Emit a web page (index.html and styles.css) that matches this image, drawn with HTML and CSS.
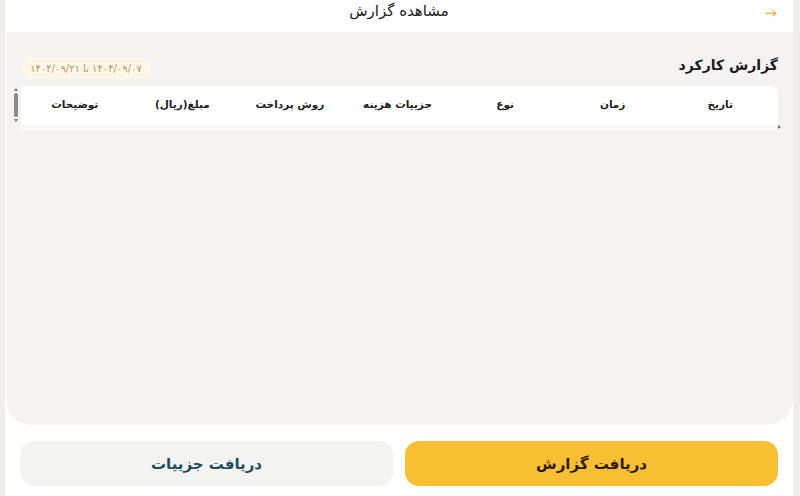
FILE: index.html
```html
<!DOCTYPE html>
<html lang="fa" dir="rtl">
<head>
    <meta charset="UTF-8">
    <meta name="viewport" content="width=device-width, initial-scale=1.0">
    <title>مشاهده گزارش</title>
    <link rel="stylesheet" href="styles.css">
</head>
<body>
    <div class="app">
        <header class="topbar">
            <span class="back">&#8594;</span>
            <h1>مشاهده گزارش</h1>
        </header>

        <section class="report">
            <div class="report-head">
                <h2>گزارش کارکرد</h2>
                <span class="range">۱۴۰۴/۰۹/۰۷ تا ۱۴۰۴/۰۹/۲۱</span>
            </div>

            <div class="table-wrap">
                <div class="table-head">
                    <div>تاریخ</div>
                    <div>زمان</div>
                    <div>نوع</div>
                    <div>جزییات هزینه</div>
                    <div>روش پرداخت</div>
                    <div>مبلغ(ریال)</div>
                    <div>توضیحات</div>
                </div>
                <div class="table-body"></div>

                <!-- tiny native-looking scrollbars of the table -->
                <div class="vscroll">
                    <span class="arrow up"></span>
                    <span class="thumb"></span>
                    <span class="arrow down"></span>
                </div>
                <span class="hscroll-arrow"></span>
            </div>
        </section>

        <div class="actions">
            <button class="btn primary">دریافت گزارش</button>
            <button class="btn secondary">دریافت جزییات</button>
        </div>
    </div>
</body>
</html>
```

FILE: styles.css
```css
* {
    box-sizing: border-box;
}
html, body {
    height: 100%;
}
body {
    margin: 0;
    background-color: #efeeed;
    font-family: "DejaVu Sans", "Noto Sans", sans-serif;
    color: #1b1b1b;
}
.app {
    height: 100%;
    margin: 0 7px 0 5px;
    background-color: #fff;
    display: flex;
    flex-direction: column;
}
.topbar {
    height: 32px;
    flex: none;
    display: flex;
    align-items: center;
    justify-content: center;
    position: relative;
    background-color: #fff;
}
.topbar h1 {
    margin: 0;
    font-size: 15px;
    font-weight: normal;
    color: #222;
    line-height: 1;
    margin-top: -9px;
}
.back {
    position: absolute;
    right: 16px;
    top: 4px;
    font-size: 15px;
    color: #f3b43e;
    font-family: "DejaVu Sans", sans-serif;
}
.report {
    flex: none;
    height: 393px;
    margin-left: 1px;
    background-color: #f4f3f1;
    border-radius: 0 0 26px 26px;
    padding: 25px 15px 0;
}
.report-head {
    display: flex;
    align-items: center;
    justify-content: space-between;
    height: 22px;
    margin-bottom: 7px;
}
.report-head h2 {
    margin: 0;
    font-size: 14px;
    font-weight: bold;
    color: #1a1a1a;
    position: relative;
    top: -3px;
}
.range {
    background-color: #fcf7e7;
    color: #b29a5f;
    font-size: 10px;
    height: 22px;
    width: 130px;
    border-radius: 11px;
    display: flex;
    align-items: center;
    justify-content: center;
}
.table-wrap {
    position: relative;
}
.table-head {
    display: grid;
    grid-template-columns: repeat(7, 1fr);
    height: 38px;
    align-items: center;
    background-color: #fff;
    border-radius: 0 8px 0 0;
    font-size: 10.5px;
    font-weight: bold;
    color: #222;
    padding-right: 4px;
    padding-bottom: 2px;
}
.table-head div {
    text-align: center;
}
.table-body {
    height: 7px;
    background-color: #f8f8f7;
}
.vscroll {
    position: absolute;
    left: -8px;
    top: 2px;
    width: 6px;
    height: 34px;
    display: flex;
    flex-direction: column;
    align-items: center;
    justify-content: space-between;
}
.vscroll .thumb {
    width: 4px;
    flex: 1;
    margin: 2px 0;
    background-color: #8a8a8a;
    border-radius: 2px;
}
.vscroll .arrow {
    width: 0;
    height: 0;
    border-left: 2px solid transparent;
    border-right: 2px solid transparent;
}
.vscroll .up {
    border-bottom: 3px solid #777;
}
.vscroll .down {
    border-top: 3px solid #777;
}
.hscroll-arrow {
    position: absolute;
    right: -3px;
    top: 39px;
    width: 0;
    height: 0;
    border-top: 2px solid transparent;
    border-bottom: 2px solid transparent;
    border-left: 3px solid #666;
}
.actions {
    display: flex;
    gap: 12px;
    padding: 16px 15px 0 15px;
}
.btn {
    flex: 1;
    height: 45px;
    border: none;
    border-radius: 14px;
    font-family: inherit;
    font-size: 15px;
    font-weight: bold;
    cursor: pointer;
}
.primary {
    background-color: #f9bf32;
    color: #2b1a0c;
}
.secondary {
    background-color: #f3f3f2;
    color: #1d4b5f;
}
```
